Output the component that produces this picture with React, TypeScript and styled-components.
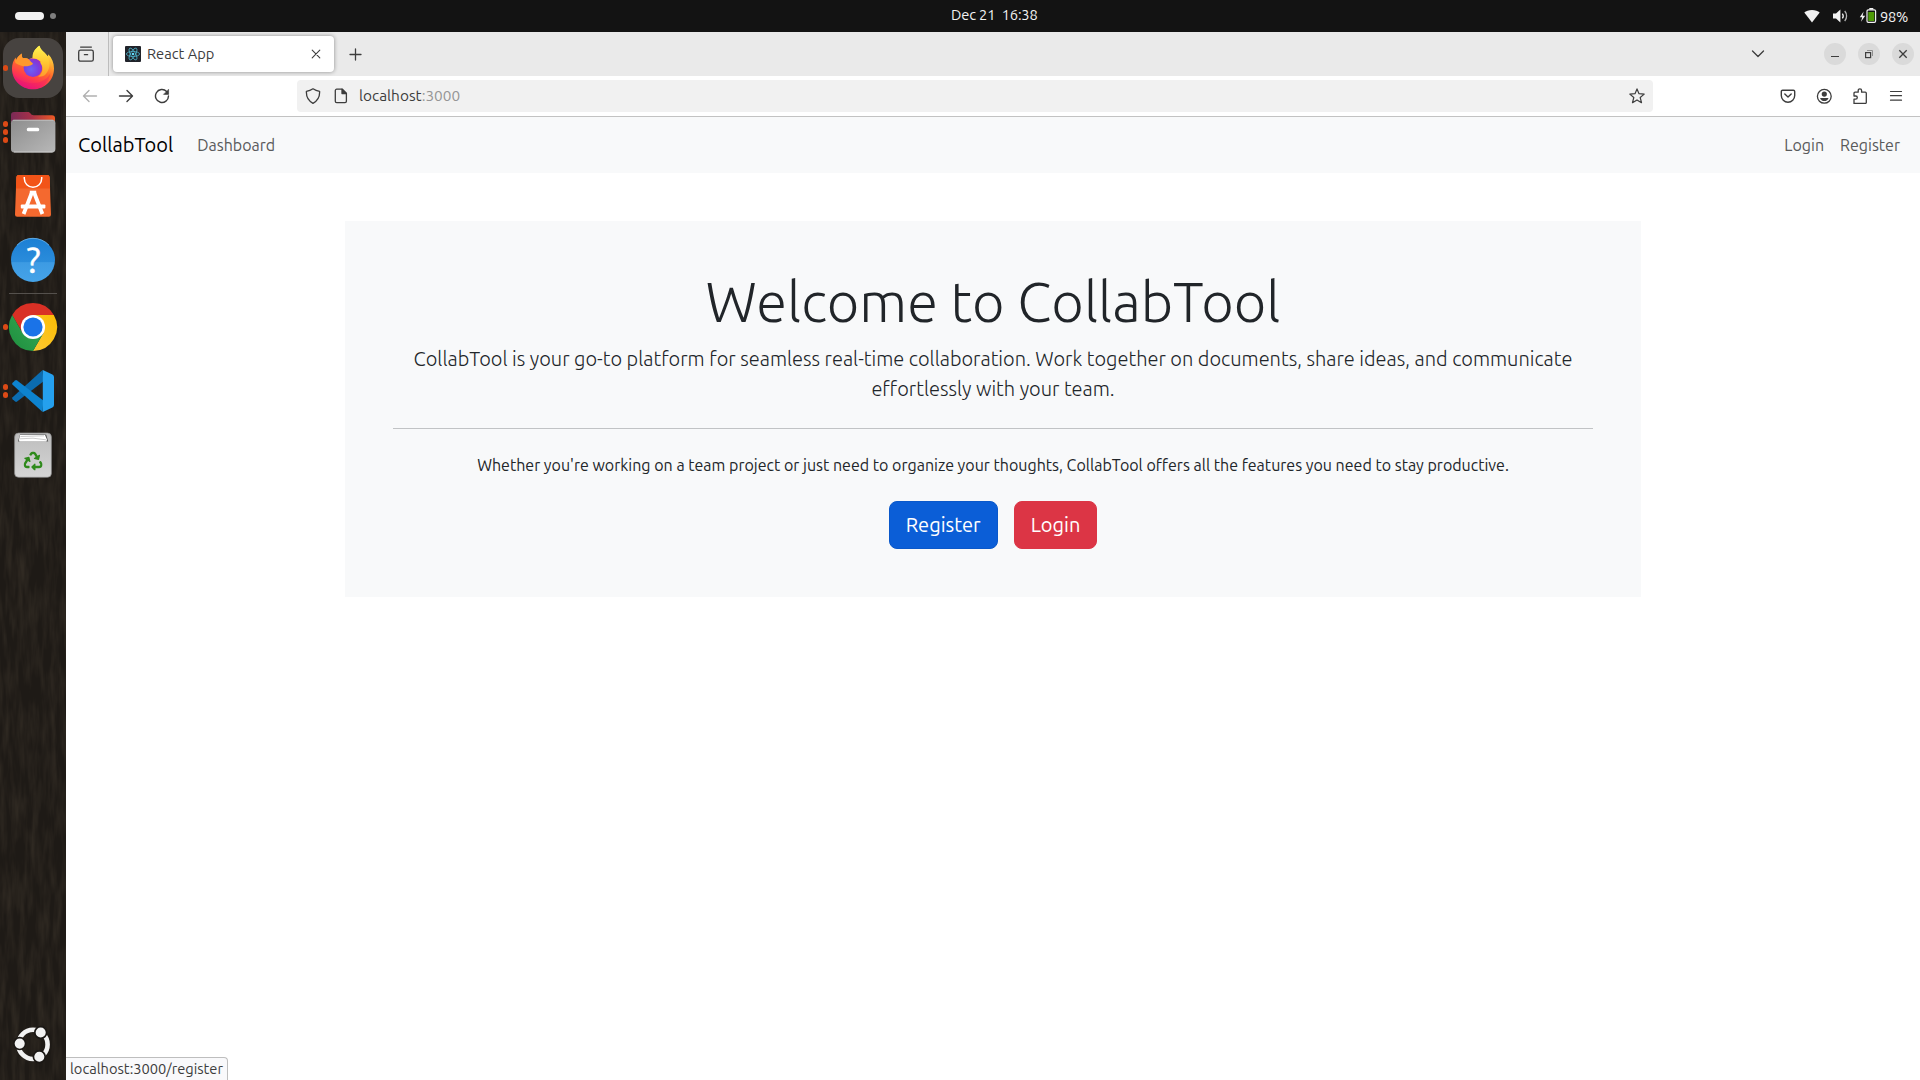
import React from "react";
import styled, { createGlobalStyle } from "styled-components";
import { FaRecycle } from "react-icons/fa";

const GlobalStyle = createGlobalStyle`
  *, *::before, *::after { box-sizing: border-box; }
  html, body { margin: 0; padding: 0; }
  body {
    background: #fff;
    color: #212529;
    font-family: Ubuntu, "Noto Sans", "Open Sans", sans-serif;
    font-size: 16px;
    line-height: 1.5;
    overflow: hidden;
  }
  svg { display: block; flex: none; }
  a { color: inherit; text-decoration: none; }
`;

/* ---------- desktop shell ---------- */

const Desktop = styled.div`
  width: 1920px;
  height: 1080px;
  display: flex;
  flex-direction: column;
  overflow: hidden;
`;

const TopBar = styled.header`
  height: 32px;
  flex: none;
  display: grid;
  grid-template-columns: 936px auto 1fr;
  align-items: center;
  padding: 0 12px 0 15px;
  background: #131313;
  color: #f2f2f2;
  font-size: 14.667px;
  line-height: 32px;
`;

const Workspaces = styled.div`
  display: flex;
  align-items: center;
  gap: 6px;
`;

const WorkspacePill = styled.span<{ $active?: boolean }>`
  width: ${(p) => (p.$active ? 29 : 6)}px;
  height: ${(p) => (p.$active ? 8 : 6)}px;
  border-radius: 4px;
  background: ${(p) => (p.$active ? "#f2f2f2" : "#7f7f7f")};
`;

const Clock = styled.time`
  white-space: pre;
  padding-bottom: 2px;
  line-height: 30px;
  letter-spacing: -0.15px;
`;

const StatusArea = styled.div`
  display: flex;
  align-items: center;
  justify-content: flex-end;
  height: 32px;
`;

const BatteryLevel = styled.span`
  line-height: 31px;
  letter-spacing: -0.25px;
`;

const Body = styled.div`
  flex: 1;
  min-height: 0;
  display: flex;
`;

const Dock = styled.aside`
  position: relative;
  width: 66px;
  flex: none;
  display: flex;
  flex-direction: column;
  align-items: center;
  gap: 4px;
  padding: 6px 0;
  background: #1e1a16;
`;

const Grain = styled.svg`
  position: absolute;
  inset: 0;
  opacity: 0.2;
`;

const Launcher = styled.div<{ $active?: boolean; $last?: boolean }>`
  position: relative;
  width: 60px;
  height: 60px;
  flex: none;
  border-radius: 16px;
  background: ${(p) => (p.$active ? "#474340" : "transparent")};
  margin-top: ${(p) => (p.$last ? "auto" : "0")};
`;

const RunDots = styled.div`
  position: absolute;
  left: 0;
  top: 0;
  height: 60px;
  display: flex;
  flex-direction: column;
  justify-content: center;
  gap: 2.6px;
`;

const RunDot = styled.span`
  width: 5.4px;
  height: 5.4px;
  border-radius: 50%;
  background: #dc4a16;
`;

const DockRule = styled.div`
  position: relative;
  width: 48px;
  height: 1px;
  margin: -1px 0;
  background: #55514d;
`;

const Window = styled.main`
  position: relative;
  flex: 1;
  min-width: 0;
  display: flex;
  flex-direction: column;
  background: #fff;
`;

/* ---------- browser chrome ---------- */

const TabStrip = styled.div`
  height: 44px;
  flex: none;
  display: flex;
  align-items: center;
  background: #eaeaea;
  color: #3d3d3d;
`;

const OverviewButton = styled.div`
  width: 43px;
  height: 44px;
  display: flex;
  align-items: center;
  padding-left: 12px;
  border-right: 1px solid #bdbdbd;
`;

const Tab = styled.div`
  width: 221px;
  height: 36px;
  margin-left: 4px;
  padding: 0 10px 0 12px;
  display: flex;
  align-items: center;
  border-radius: 4px;
  background: #fff;
  box-shadow: 0 0 4px rgba(0, 0, 0, 0.4);
  font-size: 14.667px;
`;

const TabTitle = styled.span`
  flex: 1;
  padding-left: 6px;
  line-height: 36px;
`;

const NewTab = styled.div`
  margin-left: 14px;
`;

const StripRight = styled.div`
  margin-left: auto;
  display: flex;
  align-items: center;
`;

const WindowButtons = styled.div`
  display: flex;
  gap: 12px;
  margin: 0 6px 0 59px;
`;

const WindowButton = styled.div`
  width: 22px;
  height: 22px;
  border-radius: 50%;
  background: #dadada;
`;

const Toolbar = styled.div`
  height: 41px;
  flex: none;
  display: flex;
  align-items: center;
  border-bottom: 1px solid #c2c2c2;
  background: #fff;
  color: #3d3d3d;
`;

const ToolGroup = styled.div<{ $width?: number; $right?: boolean }>`
  display: flex;
  padding: 0 6px;
  width: ${(p) => (p.$width ? `${p.$width}px` : "auto")};
  margin-left: ${(p) => (p.$right ? "auto" : "0")};
`;

const Tool = styled.div<{ $dim?: boolean }>`
  width: 36px;
  height: 32px;
  display: flex;
  align-items: center;
  justify-content: center;
  opacity: ${(p) => (p.$dim ? 0.4 : 1)};
`;

const UrlBar = styled.div`
  width: 1356px;
  height: 32px;
  padding: 0 8px;
  display: flex;
  align-items: center;
  border-radius: 4px;
  background: #f1f1f1;
  font-size: 15.4px;
`;

const UrlText = styled.span`
  flex: 1;
  padding-left: 10px;
  line-height: 32px;
`;

const Port = styled.span`
  color: #959595;
`;

const LinkStatus = styled.div`
  position: absolute;
  left: 0;
  bottom: 0;
  width: 162px;
  height: 23px;
  padding-left: 4px;
  border: 1px solid #bebebe;
  border-width: 1px 1px 0 0;
  border-radius: 0 4px 0 0;
  background: #f9f9fb;
  color: #3d3d3d;
  font-size: 14.667px;
  line-height: 21px;
  white-space: nowrap;
`;

/* ---------- page ---------- */

const Navbar = styled.nav`
  height: 56px;
  flex: none;
  display: flex;
  align-items: center;
  padding: 0 12px;
  background: #f8f9fa;
`;

const Brand = styled.a`
  margin-right: 16px;
  font-size: 20px;
  color: #000;
`;

const NavLinks = styled.div<{ $end?: boolean }>`
  display: flex;
  margin-left: ${(p) => (p.$end ? "auto" : "0")};
`;

const NavLink = styled.a`
  padding: 8px;
  color: #595a5b;
`;

const Container = styled.div`
  width: 1296px;
  margin: 48px auto 0;
`;

const Hero = styled.section`
  padding: 47px 48px 48px;
  background: #f8f9fa;
  text-align: center;
`;

const Title = styled.h1`
  margin: 0 0 9px;
  font-size: 56px;
  font-weight: 300;
  line-height: 1.2;
`;

const Lead = styled.p`
  margin: 0;
  font-size: 20px;
  font-weight: 300;
`;

const Rule = styled.hr`
  margin: 24px 0;
  border: 0;
  border-top: 1px solid #c1c3c5;
`;

const Copy = styled.p`
  margin: 0 0 24px;
`;

const Actions = styled.div`
  display: flex;
  justify-content: center;
  gap: 16px;
`;

const Button = styled.a<{ $tone: "primary" | "danger" }>`
  padding: 8px 16px;
  border: 1px solid ${(p) => (p.$tone === "primary" ? "#0a58ca" : "#dc3545")};
  border-radius: 8px;
  background: ${(p) => (p.$tone === "primary" ? "#0b5ed7" : "#dc3545")};
  color: #fff;
  font-size: 20px;
`;

/* ---------- dock artwork ---------- */

const FirefoxIcon = () => (
  <svg width="60" height="60" viewBox="0 0 60 60">
    <defs>
      <linearGradient id="ffBody" x1="0.75" y1="0.05" x2="0.35" y2="1">
        <stop offset="0" stopColor="#fff44f" />
        <stop offset="0.3" stopColor="#ffa62e" />
        <stop offset="0.52" stopColor="#ff6a2c" />
        <stop offset="0.76" stopColor="#ff3750" />
        <stop offset="1" stopColor="#e5147f" />
      </linearGradient>
      <radialGradient id="ffGlobe" cx="0.4" cy="0.6" r="0.65">
        <stop offset="0" stopColor="#6b62f5" />
        <stop offset="0.6" stopColor="#7a3fe0" />
        <stop offset="1" stopColor="#9a2bc4" />
      </radialGradient>
      <linearGradient id="ffTail" x1="0.5" y1="0" x2="0.5" y2="1">
        <stop offset="0" stopColor="#fff450" />
        <stop offset="0.55" stopColor="#ffc632" />
        <stop offset="1" stopColor="#ff9a2c" />
      </linearGradient>
    </defs>
    <path d="M36.5 7.8C37.4 12 42 14.500 44.400 18.200 45.200 17.600 45.400 17 45.300 16.200 49 20 51 25 51 30.400 51 42 41.800 51.200 30 51.200S9 42 9 30.400C9 25.800 10.500 22 12.600 19.400L12.900 22.400C14.200 19.500 16.200 17.400 18.800 15.600 18.600 17.600 18.900 19 19.800 20.200 22 19.800 24 20.200 25.800 21.200L30 19.600C29.600 15 32 10.600 36.500 7.800Z" fill="url(#ffBody)" />
    <circle cx="30" cy="29.600" r="9.400" fill="url(#ffGlobe)" />
    <path d="M36.500 7.800C37.400 12 42 14.500 44.400 18.200 48 24 47 32 42 37 40 38.500 37 39 35 38.600 39.500 36 40.500 31 38.600 27 37.600 25 36.500 24.200 38.500 24 35 20.600 32 20.400 29.600 20.400 29 15 32 10.600 36.500 7.800Z" fill="url(#ffTail)" />
    <path d="M12.600 19.400 12.900 22.400C14.200 19.500 16.200 17.400 18.800 15.600 18.600 17.600 18.900 19 19.800 20.200 22.400 19.700 25 20.600 27 22.400 28 24.600 30 24.800 30 25.600 29.600 27 27 28 24.400 28.200 21 28.600 16 27.600 12.800 25.200 11.600 24.200 11.900 20.800 12.600 19.400Z" fill="#ff982e" />
    <path d="M9.400 34C14 43.400 25 46.600 34 44.800 40 43.600 45 40 47.400 35 46 45 39 51.200 30 51.200 19.600 51.200 11 44 9.400 34Z" fill="#e9106f" opacity="0.3" />
  </svg>
);

const FilesIcon = () => (
  <svg width="60" height="60" viewBox="0 0 60 60">
    <defs>
      <linearGradient id="flBack" x1="0" x2="1">
        <stop offset="0" stopColor="#7a2a57" />
        <stop offset="0.45" stopColor="#a53049" />
        <stop offset="1" stopColor="#ef5a24" />
      </linearGradient>
      <linearGradient id="flFront" x1="0" y1="0" x2="1" y2="1">
        <stop offset="0" stopColor="#8d8d8d" />
        <stop offset="1" stopColor="#b8b8b8" />
      </linearGradient>
    </defs>
    <path d="M8 13a3 3 0 0 1 3-3h13.6c1.6 0 2.2.5 3 1.6.7 1 1.4 1.6 3 1.6H49a3 3 0 0 1 3 3V30H8Z" fill="url(#flBack)" />
    <rect x="8" y="17.8" width="44.4" height="32.6" rx="3.4" fill="url(#flFront)" />
    <path d="M10 18.3h40.4" stroke="#c4c4c4" strokeWidth="0.8" />
    <path d="M11 50h38.6" stroke="#d6d6d6" strokeWidth="0.8" />
    <rect x="23.8" y="25.8" width="12.4" height="3.4" rx="1.5" fill="#fff" />
  </svg>
);

const AppCenterIcon = () => (
  <svg width="60" height="60" viewBox="0 0 60 60">
    <path d="M15.6 9h28.8a2.2 2.2 0 0 1 2.2 2L48 48.4a2.2 2.2 0 0 1-2.2 2.3H14.2a2.2 2.2 0 0 1-2.2-2.3L13.4 11a2.2 2.2 0 0 1 2.2-2Z" fill="#f4692f" />
    <path d="M15.6 9h28.8a2.2 2.2 0 0 1 2.2 2l.5 11.5H12.9l.5-11.5a2.2 2.2 0 0 1 2.2-2Z" fill="#f25418" />
    <path d="M21.3 11v1.6a8.7 8.7 0 0 0 17.4 0V11" fill="none" stroke="#fff" strokeWidth="1.5" />
    <path d="M29 26.2 20.6 48M31 26.2 39.4 48" stroke="#fff" strokeWidth="3.8" />
    <path d="M26.8 26.4h6.4" stroke="#fff" strokeWidth="3.4" />
    <rect x="17.8" y="38.6" width="24.6" height="3.8" rx="1" fill="#fff" />
  </svg>
);

const HelpIcon = () => (
  <svg width="60" height="60" viewBox="0 0 60 60">
    <defs>
      <linearGradient id="hpBg" x1="0" y1="0" x2="0" y2="1">
        <stop offset="0" stopColor="#1c7fd4" />
        <stop offset="0.54" stopColor="#2a8cdb" />
        <stop offset="0.56" stopColor="#3d9be3" />
        <stop offset="1" stopColor="#45a3e8" />
      </linearGradient>
    </defs>
    <circle cx="30" cy="30" r="22" fill="url(#hpBg)" />
    <path d="M14 15.2a22 22 0 0 1 32 0" fill="none" stroke="#6db6ec" strokeWidth="0.8" />
    <text x="30.6" y="43" textAnchor="middle" fontSize="36" fill="#fff" stroke="#fff" strokeWidth="0.4" fontFamily="Ubuntu, 'Noto Sans', sans-serif">?</text>
  </svg>
);

const ChromeIcon = () => (
  <svg width="60" height="60" viewBox="0 0 60 60">
    <defs>
      <linearGradient id="crGreen" x1="0" y1="1" x2="1" y2="0.2">
        <stop offset="0" stopColor="#1e8e3e" />
        <stop offset="1" stopColor="#34a853" />
      </linearGradient>
      <linearGradient id="crYellow" x1="0" y1="1" x2="1" y2="0">
        <stop offset="0" stopColor="#fcc934" />
        <stop offset="1" stopColor="#fbbc04" />
      </linearGradient>
    </defs>
    <path d="M9.2 18A24 24 0 0 1 50.8 18H30L19.6 36Z" fill="#d93025" />
    <path d="M50.8 18A24 24 0 0 1 30 54L40.4 36 30 18Z" fill="url(#crYellow)" />
    <path d="M30 54A24 24 0 0 1 9.2 18L19.6 36H40.4Z" fill="url(#crGreen)" />
    <circle cx="30" cy="30" r="12.1" fill="#fff" />
    <circle cx="30" cy="30" r="9.6" fill="#1a73e8" />
  </svg>
);

const CodeIcon = () => (
  <svg width="60" height="60" viewBox="0 0 60 60">
    <path d="M39.6 9 9.6 36.2a1.4 1.4 0 0 0 0 2l2.5 2.3a1.6 1.6 0 0 0 2 .1L40.3 20.6Z" fill="#0b6cb0" />
    <path d="M39.6 51 9.6 23.8a1.4 1.4 0 0 1 0-2l2.5-2.3a1.6 1.6 0 0 1 2-.1L40.3 39.4Z" fill="#0d83cf" />
    <path d="M39.8 9 49.4 13.6A2.8 2.8 0 0 1 51 16.1V43.900a2.800 2.800 0 0 1-1.600 2.500L39.800 51Z" fill="#25a0ee" />
  </svg>
);

const TrashIcon = () => (
  <svg width="60" height="60" viewBox="0 0 60 60">
    <defs>
      <linearGradient id="trBody" x1="0" y1="0" x2="0" y2="1">
        <stop offset="0" stopColor="#bdbdbd" />
        <stop offset="1" stopColor="#d5d5d5" />
      </linearGradient>
    </defs>
    <rect x="11.6" y="8" width="36.8" height="44.3" rx="4" fill="url(#trBody)" stroke="#8a8a8a" strokeWidth="0.7" />
    <path d="M17 9.600h26.200l2 6.800H15Z" fill="#565656" />
    <path d="M17 10h25l2 4.600-.6 2H16.400l-.4-1.600Z" fill="#fff" />
    <path d="M17.500 11.500 41 10.800M17 13.800l13-.6 13 1.600" fill="none" stroke="#a9a9a9" strokeWidth="0.6" />
    <g transform="translate(20.6 26.6)">
      <FaRecycle size={19} color="#2f8a1c" />
    </g>
  </svg>
);

const UbuntuIcon = () => (
  <svg width="60" height="60" viewBox="0 0 60 60">
    <circle cx="30" cy="30.4" r="14.6" fill="none" stroke="#f2f2f2" strokeWidth="4.6" />
    <g fill="#f2f2f2" stroke="#1a1714" strokeWidth="1.7">
      <circle cx="16.7" cy="29.6" r="5.9" />
      <circle cx="37.7" cy="18.5" r="5.9" />
      <circle cx="36.3" cy="42.7" r="5.9" />
    </g>
  </svg>
);

/* ---------- small icons ---------- */

const Glyph = styled.svg.attrs({
  fill: "none",
  stroke: "currentColor",
  strokeLinecap: "round",
  strokeLinejoin: "round",
})``;

const ReactFavicon = () => (
  <svg width="16" height="16" viewBox="0 0 16 16">
    <rect width="16" height="16" rx="1" fill="#20232a" />
    <g fill="none" stroke="#4fb3ca" strokeWidth="0.8">
      <ellipse cx="8" cy="8" rx="6.6" ry="2.5" />
      <ellipse cx="8" cy="8" rx="6.6" ry="2.5" transform="rotate(60 8 8)" />
      <ellipse cx="8" cy="8" rx="6.6" ry="2.5" transform="rotate(120 8 8)" />
    </g>
    <circle cx="8" cy="8" r="1.3" fill="#61dafb" />
  </svg>
);

type LauncherInfo = { icon: React.ReactNode; dots: number; active?: boolean };

const pinned: LauncherInfo[] = [
  { icon: <FirefoxIcon />, dots: 1, active: true },
  { icon: <FilesIcon />, dots: 3 },
  { icon: <AppCenterIcon />, dots: 0 },
  { icon: <HelpIcon />, dots: 0 },
];

const running: LauncherInfo[] = [
  { icon: <ChromeIcon />, dots: 1 },
  { icon: <CodeIcon />, dots: 2 },
  { icon: <TrashIcon />, dots: 0 },
];

const DockItem = ({ icon, dots, active }: LauncherInfo) => (
  <Launcher $active={active}>
    {icon}
    <RunDots>
      {Array.from({ length: dots }, (_, i) => (
        <RunDot key={i} />
      ))}
    </RunDots>
  </Launcher>
);

export default function App() {
  return (
    <Desktop>
      <GlobalStyle />
      <TopBar>
        <Workspaces>
          <WorkspacePill $active />
          <WorkspacePill />
        </Workspaces>
        <Clock>Dec 21  16:38</Clock>
        <StatusArea>
          <svg width="76" height="32" viewBox="0 0 76 32">
            <path d="M8 22.400.3 12.600C2 10.800 4.800 9.900 8 9.900s6 .9 7.700 2.700Z" fill="#f2f2f2" />
            <path d="M29 13.400h3l4.400-4v13.200l-4.400-4h-3Z" fill="#f2f2f2" />
            <path d="M38.400 13.600c1 1.400 1 3.400 0 4.800" fill="none" stroke="#f2f2f2" strokeWidth="1.3" />
            <path d="M40.700 11c2.500 2.800 2.500 7.200 0 10" fill="none" stroke="#b5b5b5" strokeWidth="1.3" />
            <path d="m59.600 11.400-3.800 5.800h2.400l-1.200 4.600 4.200-6h-2.600Z" fill="#f2f2f2" />
            <rect x="63" y="9.800" width="8.600" height="12.500" rx="1.300" fill="#131313" stroke="#f2f2f2" strokeWidth="1.2" />
            <rect x="65.300" y="8" width="4" height="1.600" fill="#f2f2f2" />
            <rect x="64.300" y="12" width="6" height="9" fill="#4e9a06" />
          </svg>
          <BatteryLevel>98%</BatteryLevel>
        </StatusArea>
      </TopBar>

      <Body>
        <Dock>
          <Grain width="66" height="1048">
            <filter id="wood" x="0" y="0" width="1" height="1">
              <feTurbulence type="fractalNoise" baseFrequency="0.16 0.025" numOctaves="3" seed="7" />
              <feColorMatrix values="0 0 0 0 0.25  0 0 0 0 0.19  0 0 0 0 0.12  1.6 0 0 0 -0.56" />
            </filter>
            <rect width="66" height="1048" filter="url(#wood)" />
          </Grain>
          {pinned.map((l, i) => (
            <DockItem key={i} {...l} />
          ))}
          <DockRule />
          {running.map((l, i) => (
            <DockItem key={i} {...l} />
          ))}
          <Launcher $last>
            <UbuntuIcon />
          </Launcher>
        </Dock>

        <Window>
          <TabStrip>
            <OverviewButton>
              <Glyph width="16" height="16" viewBox="0 0 16 16" strokeWidth="1.3">
                <rect x="0.7" y="4.2" width="14.6" height="11" rx="1.8" />
                <path d="M2.600 1.100h10.800M6.400 8.700h3.200" />
              </Glyph>
            </OverviewButton>
            <Tab>
              <ReactFavicon />
              <TabTitle>React App</TabTitle>
              <Glyph width="16" height="16" viewBox="0 0 16 16" strokeWidth="1.1">
                <path d="m4.200 4.200 7.600 7.600M11.800 4.200l-7.600 7.600" />
              </Glyph>
            </Tab>
            <NewTab>
              <Glyph width="15" height="15" viewBox="0 0 15 15" strokeWidth="1.3">
                <path d="M7.500 2v11M2 7.500h11" />
              </Glyph>
            </NewTab>
            <StripRight>
              <Glyph width="14" height="14" viewBox="0 0 14 14" strokeWidth="1.3">
                <path d="m1.500 4 5.500 5.500L12.500 4" />
              </Glyph>
              <WindowButtons>
                <WindowButton>
                  <svg width="22" height="22" viewBox="0 0 22 22">
                    <path d="M7 13.500h8" stroke="#3d3d3d" />
                  </svg>
                </WindowButton>
                <WindowButton>
                  <svg width="22" height="22" viewBox="0 0 22 22" fill="none">
                    <rect x="7.600" y="9.600" width="5" height="5" stroke="#3d3d3d" strokeWidth="1.2" />
                    <path d="M9 7.500h5.500V13" stroke="#8f8f8f" />
                  </svg>
                </WindowButton>
                <WindowButton>
                  <svg width="22" height="22" viewBox="0 0 22 22">
                    <path d="m7.300 7.300 7.400 7.400M14.700 7.300l-7.400 7.400" stroke="#3d3d3d" strokeWidth="1.3" />
                  </svg>
                </WindowButton>
              </WindowButtons>
            </StripRight>
          </TabStrip>

          <Toolbar>
            <ToolGroup $width={231}>
              <Tool $dim>
                <Glyph width="16" height="16" viewBox="0 0 16 16" strokeWidth="1.4">
                  <path d="M14.500 8H1.600M7 2.600 1.500 8 7 13.400" />
                </Glyph>
              </Tool>
              <Tool>
                <Glyph width="16" height="16" viewBox="0 0 16 16" strokeWidth="1.4">
                  <path d="M1.500 8h12.900M9 2.600 14.500 8 9 13.400" />
                </Glyph>
              </Tool>
              <Tool>
                <Glyph width="16" height="16" viewBox="0 0 16 16" strokeWidth="1.4">
                  <path d="M12.600 3.400A6.500 6.500 0 1 0 14.500 8" />
                  <path d="M14.600 1.600v4.800H9.800Z" fill="currentColor" strokeWidth="0.6" />
                </Glyph>
              </Tool>
            </ToolGroup>
            <UrlBar>
              <Glyph width="16" height="16" viewBox="0 0 16 16" strokeWidth="1.3">
                <path d="M8 .8c2 1.400 4.200 2.200 6.600 2.500.3 5.200-1.600 9.400-6.600 12C3 12.700 1.100 8.500 1.400 3.300 3.800 3 6 2.200 8 .8Z" />
              </Glyph>
              <Glyph width="28" height="16" viewBox="-12 0 28 16" strokeWidth="1.3">
                <path d="M3.700 1.200h5.600l4.100 4.100v7.900a1.400 1.400 0 0 1-1.400 1.400H3.700a1.400 1.400 0 0 1-1.400-1.400V2.600a1.400 1.400 0 0 1 1.400-1.400Z" />
                <path d="M9 1.300v4.300h4.300Z" fill="currentColor" />
              </Glyph>
              <UrlText>
                localhost<Port>:3000</Port>
              </UrlText>
              <Glyph width="16" height="16" viewBox="0 0 16 16" strokeWidth="1.2">
                <path d="m8 .9 2 4.800 5.200.4-4 3.400 1.300 5.200L8 11.900l-4.500 2.800 1.300-5.200-4-3.400L6 5.700Z" />
              </Glyph>
            </UrlBar>
            <ToolGroup $right>
              <Tool>
                <Glyph width="16" height="16" viewBox="0 0 16 16" strokeWidth="1.4">
                  <path d="M2.600 2.200h10.800a1.300 1.300 0 0 1 1.300 1.300v4A6.700 6.700 0 0 1 1.300 7.500v-4a1.300 1.300 0 0 1 1.300-1.300Z" />
                  <path d="M4.800 6 8 9l3.200-3" />
                </Glyph>
              </Tool>
              <Tool>
                <Glyph width="16" height="16" viewBox="0 0 16 16" strokeWidth="1.3">
                  <circle cx="8.300" cy="8.300" r="6.900" />
                  <circle cx="8.300" cy="6.100" r="2.600" fill="currentColor" stroke="none" />
                  <path d="M4.100 9.900h8.400c-.4 2-2.200 3.200-4.200 3.200S4.500 11.900 4.100 9.900Z" fill="currentColor" stroke="none" />
                </Glyph>
              </Tool>
              <Tool>
                <Glyph width="16" height="16" viewBox="0 0 16 16" strokeWidth="1.3">
                  <path d="M2 5.200a1 1 0 0 1 1-1h3.200V2.500a1.700 1.700 0 0 1 3.400 0v1.700h3.700a1 1 0 0 1 1 1v9.200a1 1 0 0 1-1 1H2v-4.200h1.700a1.600 1.600 0 0 0 0-3.200H2Z" />
                </Glyph>
              </Tool>
              <Tool>
                <Glyph width="16" height="16" viewBox="0 0 16 16" strokeWidth="1.2">
                  <path d="M2.500 3.500h11M2.500 7.700h11M2.500 12.200h11" />
                </Glyph>
              </Tool>
            </ToolGroup>
          </Toolbar>

          <Navbar>
            <Brand>CollabTool</Brand>
            <NavLinks>
              <NavLink>Dashboard</NavLink>
            </NavLinks>
            <NavLinks $end>
              <NavLink>Login</NavLink>
              <NavLink>Register</NavLink>
            </NavLinks>
          </Navbar>

          <Container>
            <Hero>
              <Title>Welcome to CollabTool</Title>
              <Lead>
                CollabTool is your go-to platform for seamless real-time collaboration. Work together on documents,
                share ideas, and communicate effortlessly with your team.
              </Lead>
              <Rule />
              <Copy>
                Whether you're working on a team project or just need to organize your thoughts, CollabTool offers all
                the features you need to stay productive.
              </Copy>
              <Actions>
                <Button $tone="primary">Register</Button>
                <Button $tone="danger">Login</Button>
              </Actions>
            </Hero>
          </Container>

          <LinkStatus>localhost:3000/register</LinkStatus>
        </Window>
      </Body>
    </Desktop>
  );
}
